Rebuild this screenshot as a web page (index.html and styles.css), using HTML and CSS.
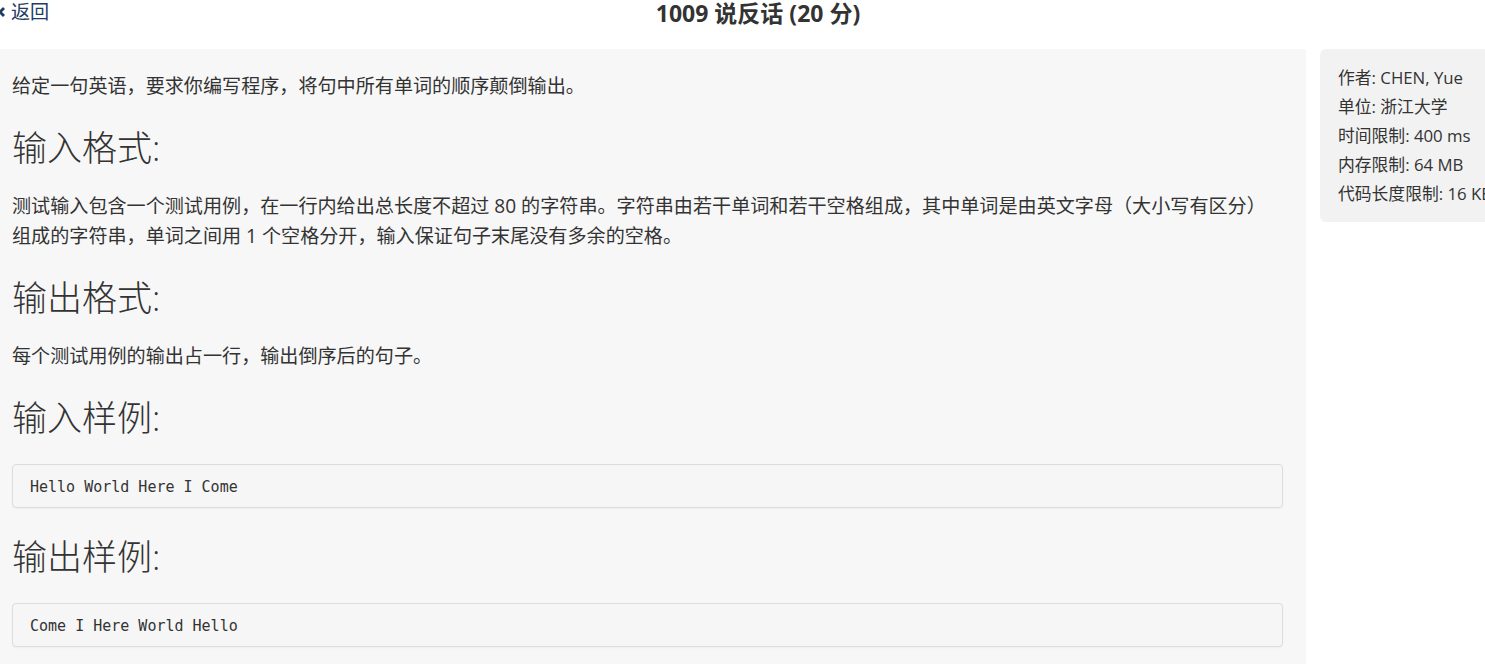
FILE: index.html
```html
<!DOCTYPE html>
<html lang="zh-CN">

<head>
    <meta charset="UTF-8">
    <meta name="viewport" content="width=device-width, initial-scale=1.0">
    <title>1009 说反话</title>

    <link rel="stylesheet" href="styles.css">
</head>

<body>
    <div class="page">
        <div class="topbar">
            <a class="back" href="#">
                <svg class="back-icon" width="10" height="12" viewBox="0 0 10 12">
                    <path d="M7 2 L3 6 L7 10" fill="none" stroke="#1f3c63" stroke-width="2.8" />
                </svg>
                返回
            </a>
            <h1 class="title">1009 说反话 (20 分)</h1>
            <div></div>
        </div>

        <div class="content">
            <div class="problem">
                <p>给定一句英语，要求你编写程序，将句中所有单词的顺序颠倒输出。</p>

                <h2>输入格式:</h2>
                <p>测试输入包含一个测试用例，在一行内给出总长度不超过 80 的字符串。字符串由若干单词和若干空格组成，其中单词是由英文字母（大小写有区分）组成的字符串，单词之间用 1 个空格分开，输入保证句子末尾没有多余的空格。</p>

                <h2>输出格式:</h2>
                <p>每个测试用例的输出占一行，输出倒序后的句子。</p>

                <h2>输入样例:</h2>
                <pre class="sample">Hello World Here I Come</pre>

                <h2>输出样例:</h2>
                <pre class="sample">Come I Here World Hello</pre>
            </div>

            <div class="info">
                <div>作者: CHEN, Yue</div>
                <div>单位: 浙江大学</div>
                <div>时间限制: 400 ms</div>
                <div>内存限制: 64 MB</div>
                <div>代码长度限制: 16 KB</div>
            </div>
        </div>
    </div>
</body>

</html>
```

FILE: styles.css
```css
* {
    box-sizing: border-box;
    margin: 0;
    padding: 0;
}

html,
body {
    overflow: hidden;
    background: #ffffff;
}

body {
    font-family: "Open Sans", "Noto Sans CJK SC", sans-serif;
    color: #333333;
}

.page {
    width: 1516px;
}

/* top bar */
.topbar {
    display: grid;
    grid-template-columns: 200px 1fr 200px;
    align-items: start;
    height: 49px;
}

.back {
    display: flex;
    align-items: center;
    gap: 4px;
    margin-left: -3px;
    color: #1f3c63;
    text-decoration: none;
    font-size: 19.1px;
    line-height: 24px;
}

.title {
    text-align: center;
    font-size: 23px;
    font-weight: 700;
    line-height: 28px;
    margin-top: -1px;
    color: #333333;
}

/* main area */
.content {
    display: flex;
    align-items: flex-start;
    gap: 14px;
}

.problem {
    width: 1306px;
    min-height: 620px;
    background: #f7f7f7;
    padding: 22px 23px 20px 12px;
    font-size: 19.1px;
    line-height: 30px;
}

.problem p {
    max-width: 1270px;
}

.problem h2 {
    font-size: 35px;
    font-weight: 300;
    line-height: 38px;
    margin: 28px 0 24px;
    color: #333333;
}

.problem h2 + .sample {
    margin-top: 27px;
}

.sample + h2 {
    margin-top: 30px;
}

.sample {
    font-family: "DejaVu Sans Mono", monospace;
    font-size: 15px;
    line-height: 20px;
    background: #f6f6f6;
    border: 1px solid #dddddd;
    border-radius: 4px;
    box-shadow: 0 1px 2px rgba(0, 0, 0, 0.04);
    padding: 12px 17px 10px;
    color: #333333;
}

.info {
    width: 196px;
    background: #f2f2f2;
    border-radius: 6px;
    padding: 14px 0 14px 18px;
    font-size: 16.8px;
    line-height: 29px;
    white-space: nowrap;
}
```
